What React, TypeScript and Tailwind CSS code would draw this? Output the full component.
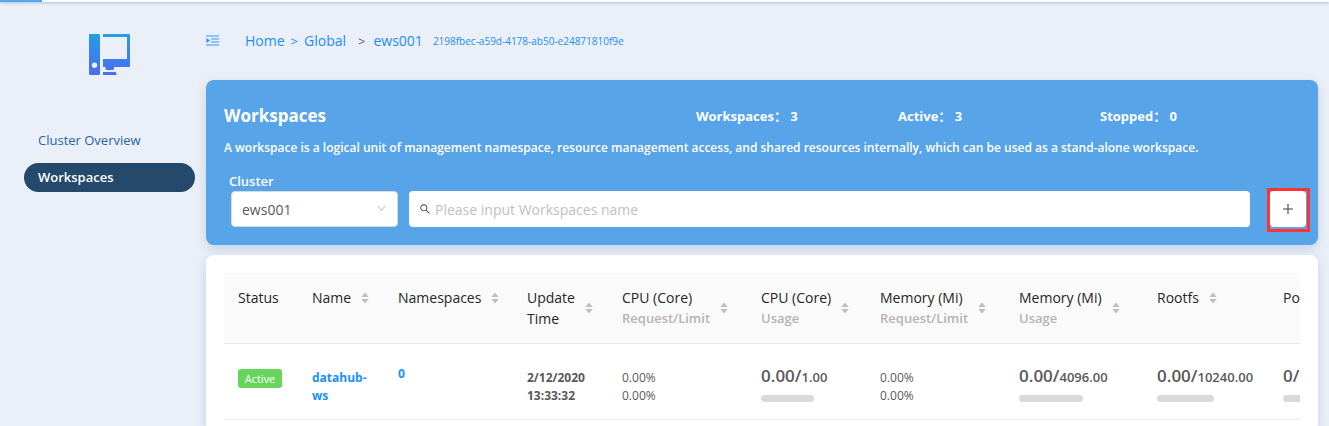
import React from "react";
import { AiOutlineDown, AiOutlineSearch, AiOutlinePlus } from "react-icons/ai";

type Header = { title: string; sub?: string; sortable?: boolean };

const headers: Header[] = [
  { title: "Status" },
  { title: "Name", sortable: true },
  { title: "Namespaces", sortable: true },
  { title: "Update\nTime", sortable: true },
  { title: "CPU (Core)", sub: "Request/Limit", sortable: true },
  { title: "CPU (Core)", sub: "Usage", sortable: true },
  { title: "Memory (Mi)", sub: "Request/Limit", sortable: true },
  { title: "Memory (Mi)", sub: "Usage", sortable: true },
  { title: "Rootfs", sortable: true },
  { title: "Pods", sortable: true },
];

function Logo() {
  return (
    <svg width="42" height="42" viewBox="0 0 42 42" aria-hidden="true">
      <defs>
        <linearGradient id="logo-fill" gradientUnits="userSpaceOnUse" x1="0" y1="0" x2="0" y2="42">
          <stop offset="0" stopColor="#259ee4" />
          <stop offset="1" stopColor="#4a6cf0" />
        </linearGradient>
      </defs>
      <g fill="url(#logo-fill)">
        <path
          fillRule="evenodd"
          d="M1 0h9a1 1 0 0 1 1 1v39a1 1 0 0 1-1 1H1a1 1 0 0 1-1-1V1a1 1 0 0 1 1-1zM5.500 28.500a2.700 2.700 0 1 0 0 5.400a2.700 2.700 0 0 0 0-5.400z"
        />
        <path d="M14 0h26a1 1 0 0 1 1 1v31a1 1 0 0 1-1 1H25v1.500a1.500 1.500 0 0 1-1.500 1.500h-5.500a1.500 1.500 0 0 1-1.500-1.500V33H14v-8h24V3H14z" />
        <path d="M14 38h12a1.500 1.500 0 0 1 1.500 1.500V41H14z" />
      </g>
    </svg>
  );
}

function MenuIcon() {
  return (
    <svg width="13" height="12" viewBox="0 0 13 12" aria-hidden="true">
      <g fill="#8cc4fb">
        <rect x="0" y="0" width="13" height="2" />
        <rect x="5" y="3" width="8" height="2" />
        <rect x="5" y="6" width="8" height="2" />
        <rect x="0" y="9" width="13" height="2" />
      </g>
      <path d="M0.500 3l3.500 2.500l-3.500 2.500z" fill="#1890ff" />
    </svg>
  );
}

function SortIcon() {
  return (
    <svg width="8" height="12" viewBox="0 0 8 12" fill="#bfbfbf" className="shrink-0" aria-hidden="true">
      <path d="M4 0.500L7.700 5H0.300z" />
      <path d="M4 11.500L7.700 7H0.300z" />
    </svg>
  );
}

function Stat({ label, value }: { label: string; value: number }) {
  return (
    <p className="pt-0.5 text-[13px] font-bold">
      {label}： {value}
    </p>
  );
}

function Ratio({ used, total, bar }: { used: string; total: string; bar: string }) {
  return (
    <td className="pt-6 pb-[14px] pl-3.5 align-top whitespace-nowrap">
      <div className="flex h-[19px] items-baseline text-[13px] leading-4 font-semibold">
        <span className="text-[17px] leading-4">{used}/</span>
        <span>{total}</span>
      </div>
      <div className={"mt-2 h-[7px] rounded-full bg-[#d9d9d9] " + bar} />
    </td>
  );
}

function Percents() {
  return (
    <td className="pt-[25px] pb-[14px] pl-3.5 align-top text-xs leading-[18px]">
      0.00%
      <br />
      0.00%
    </td>
  );
}

export default function App() {
  return (
    <div className="flex min-h-screen flex-col bg-[#ebeff7] font-['Open_Sans','Noto_Sans_CJK_SC',sans-serif] text-[#595959]">
      <div className="h-0.5 bg-white shadow-[0_1px_3px_#9fb8dc]">
        <div className="h-0.5 w-[42px] bg-[#58a4e9]" />
      </div>
      <div className="flex flex-1">
        <aside className="flex w-[206px] shrink-0 flex-col">
          <div className="flex h-[124px] pt-8 pl-[89px]">
            <Logo />
          </div>
          <nav className="flex flex-col gap-2 pr-[11px] pl-6 text-[13px] leading-[29px]">
            <a href="#overview" className="px-3.5 text-[#1f66ad]">
              Cluster Overview
            </a>
            <a href="#workspaces" className="rounded-full bg-[#24496b] px-3.5 font-semibold text-white">
              Workspaces
            </a>
          </nav>
        </aside>
        <main className="flex min-w-0 flex-1 flex-col pr-[11px]">
          <div className="flex h-[78px] items-center text-sm text-[#1890ff]">
            <button type="button" aria-label="Toggle menu">
              <MenuIcon />
            </button>
            <nav aria-label="Breadcrumb" className="flex items-center pl-[26px]">
              <a href="#home">Home</a>
              <span className="px-1.5 text-[13px]">&gt;</span>
              <a href="#global">Global</a>
              <span className="pr-2 pl-3 text-[13px] text-[#595959]">&gt;</span>
              <a href="#ews001">ews001</a>
              <span className="pl-2.5 text-[10px]">2198fbec-a59d-4178-ab50-e24871810f9e</span>
            </nav>
          </div>
          <section className="rounded-lg bg-[#58a4e9] px-[18px] pt-[22px] pb-[18px] text-white shadow-[0_4px_12px_#c3d3e6]">
            <div className="grid grid-cols-[1fr_202px_202px_200px] items-center">
              <h1 className="text-[17px] leading-7 font-bold">Workspaces</h1>
              <Stat label="Workspaces" value={3} />
              <Stat label="Active" value={3} />
              <Stat label="Stopped" value={0} />
            </div>
            <p className="pt-[9px] text-xs leading-[18px] font-semibold">
              A workspace is a logical unit of management namespace, resource management access, and shared resources
              internally, which can be used as a stand-alone workspace.
            </p>
            <label htmlFor="cluster" className="block pt-[15px] pl-[5px] text-[13px] leading-[19px] font-semibold">
              Cluster
            </label>
            <div className="flex items-start pl-[7px]">
              <div className="relative w-[167px] shrink-0">
                <select
                  id="cluster"
                  className="h-9 w-full appearance-none rounded-sm border border-[#d9d9d9] bg-white px-2.5 pt-0.5 text-sm text-[#595959]"
                >
                  <option>ews001</option>
                </select>
                <AiOutlineDown className="pointer-events-none absolute top-3 right-[11px] size-[11px] text-[#bfbfbf]" />
              </div>
              <div className="ml-[11px] flex h-9 flex-1 items-center gap-1 rounded bg-white px-2.5">
                <AiOutlineSearch className="size-3 text-[#404040]" />
                <input
                  type="text"
                  aria-label="Workspaces name"
                  placeholder="Please input Workspaces name"
                  className="min-w-0 flex-1 pt-0.5 text-sm text-[#595959] outline-none placeholder:text-[#bfbfbf]"
                />
              </div>
              <div className="-mt-[3px] -mr-2.5 -mb-[5px] ml-[17px] border-3 border-[#ff3333] pr-px pb-0.5">
                <button
                  type="button"
                  aria-label="Add workspace"
                  className="flex size-9 items-center justify-center rounded bg-white text-[#404040]"
                >
                  <AiOutlinePlus className="size-3.5" />
                </button>
              </div>
            </div>
          </section>
          <section className="mt-2.5 flex-1 rounded-t-lg bg-white px-[18px] pt-[18px] shadow-[0_4px_12px_#c3d3e6]">
            <div className="overflow-hidden">
              <table className="w-[1169px] table-fixed border-collapse text-left">
                <colgroup>
                  <col className="w-[74px]" />
                  <col className="w-[86px]" />
                  <col className="w-[129px]" />
                  <col className="w-[95px]" />
                  <col className="w-[139px]" />
                  <col className="w-[119px]" />
                  <col className="w-[139px]" />
                  <col className="w-[138px]" />
                  <col className="w-[126px]" />
                  <col />
                </colgroup>
                <thead className="bg-[#fafafa] text-sm leading-[21px] text-[#262626]">
                  <tr className="border-b border-[#e8e8e8]">
                    {headers.map((h, i) => (
                      <th key={i} className="py-3.5 pl-3.5 align-top font-normal">
                        <div className="flex items-center gap-2.5">
                          <span className="whitespace-pre">
                            {h.title}
                            {h.sub && <span className="block text-[13px] font-semibold text-[#bcb1b1]">{h.sub}</span>}
                          </span>
                          {h.sortable && <SortIcon />}
                        </div>
                      </th>
                    ))}
                  </tr>
                </thead>
                <tbody>
                  <tr className="border-b border-[#e8e8e8]">
                    <td className="pt-[25px] pl-3.5 align-top">
                      <span className="block w-11 rounded-[3px] bg-[#67d55c] text-center text-[11px] leading-[19px] text-white">
                        Active
                      </span>
                    </td>
                    <td className="pt-[25px] pr-3.5 pb-[14px] pl-3.5 align-top text-xs leading-[18px] font-bold">
                      <a href="#datahub-ws" className="text-[#1890ff]">
                        datahub-ws
                      </a>
                    </td>
                    <td className="pt-[21px] pl-3.5 align-top text-xs leading-[18px] font-bold">
                      <a href="#namespaces" className="text-[#1890ff]">
                        0
                      </a>
                    </td>
                    <td className="pt-[25px] pb-[14px] pl-3.5 align-top text-xs leading-[18px] font-bold">
                      2/12/2020
                      <br />
                      13:33:32
                    </td>
                    <Percents />
                    <Ratio bar="w-[53px]" used="0.00" total="1.00" />
                    <Percents />
                    <Ratio bar="w-16" used="0.00" total="4096.00" />
                    <Ratio bar="w-[57px]" used="0.00" total="10240.00" />
                    <Ratio bar="w-[53px]" used="0" total="110" />
                  </tr>
                </tbody>
              </table>
            </div>
          </section>
        </main>
      </div>
    </div>
  );
}
